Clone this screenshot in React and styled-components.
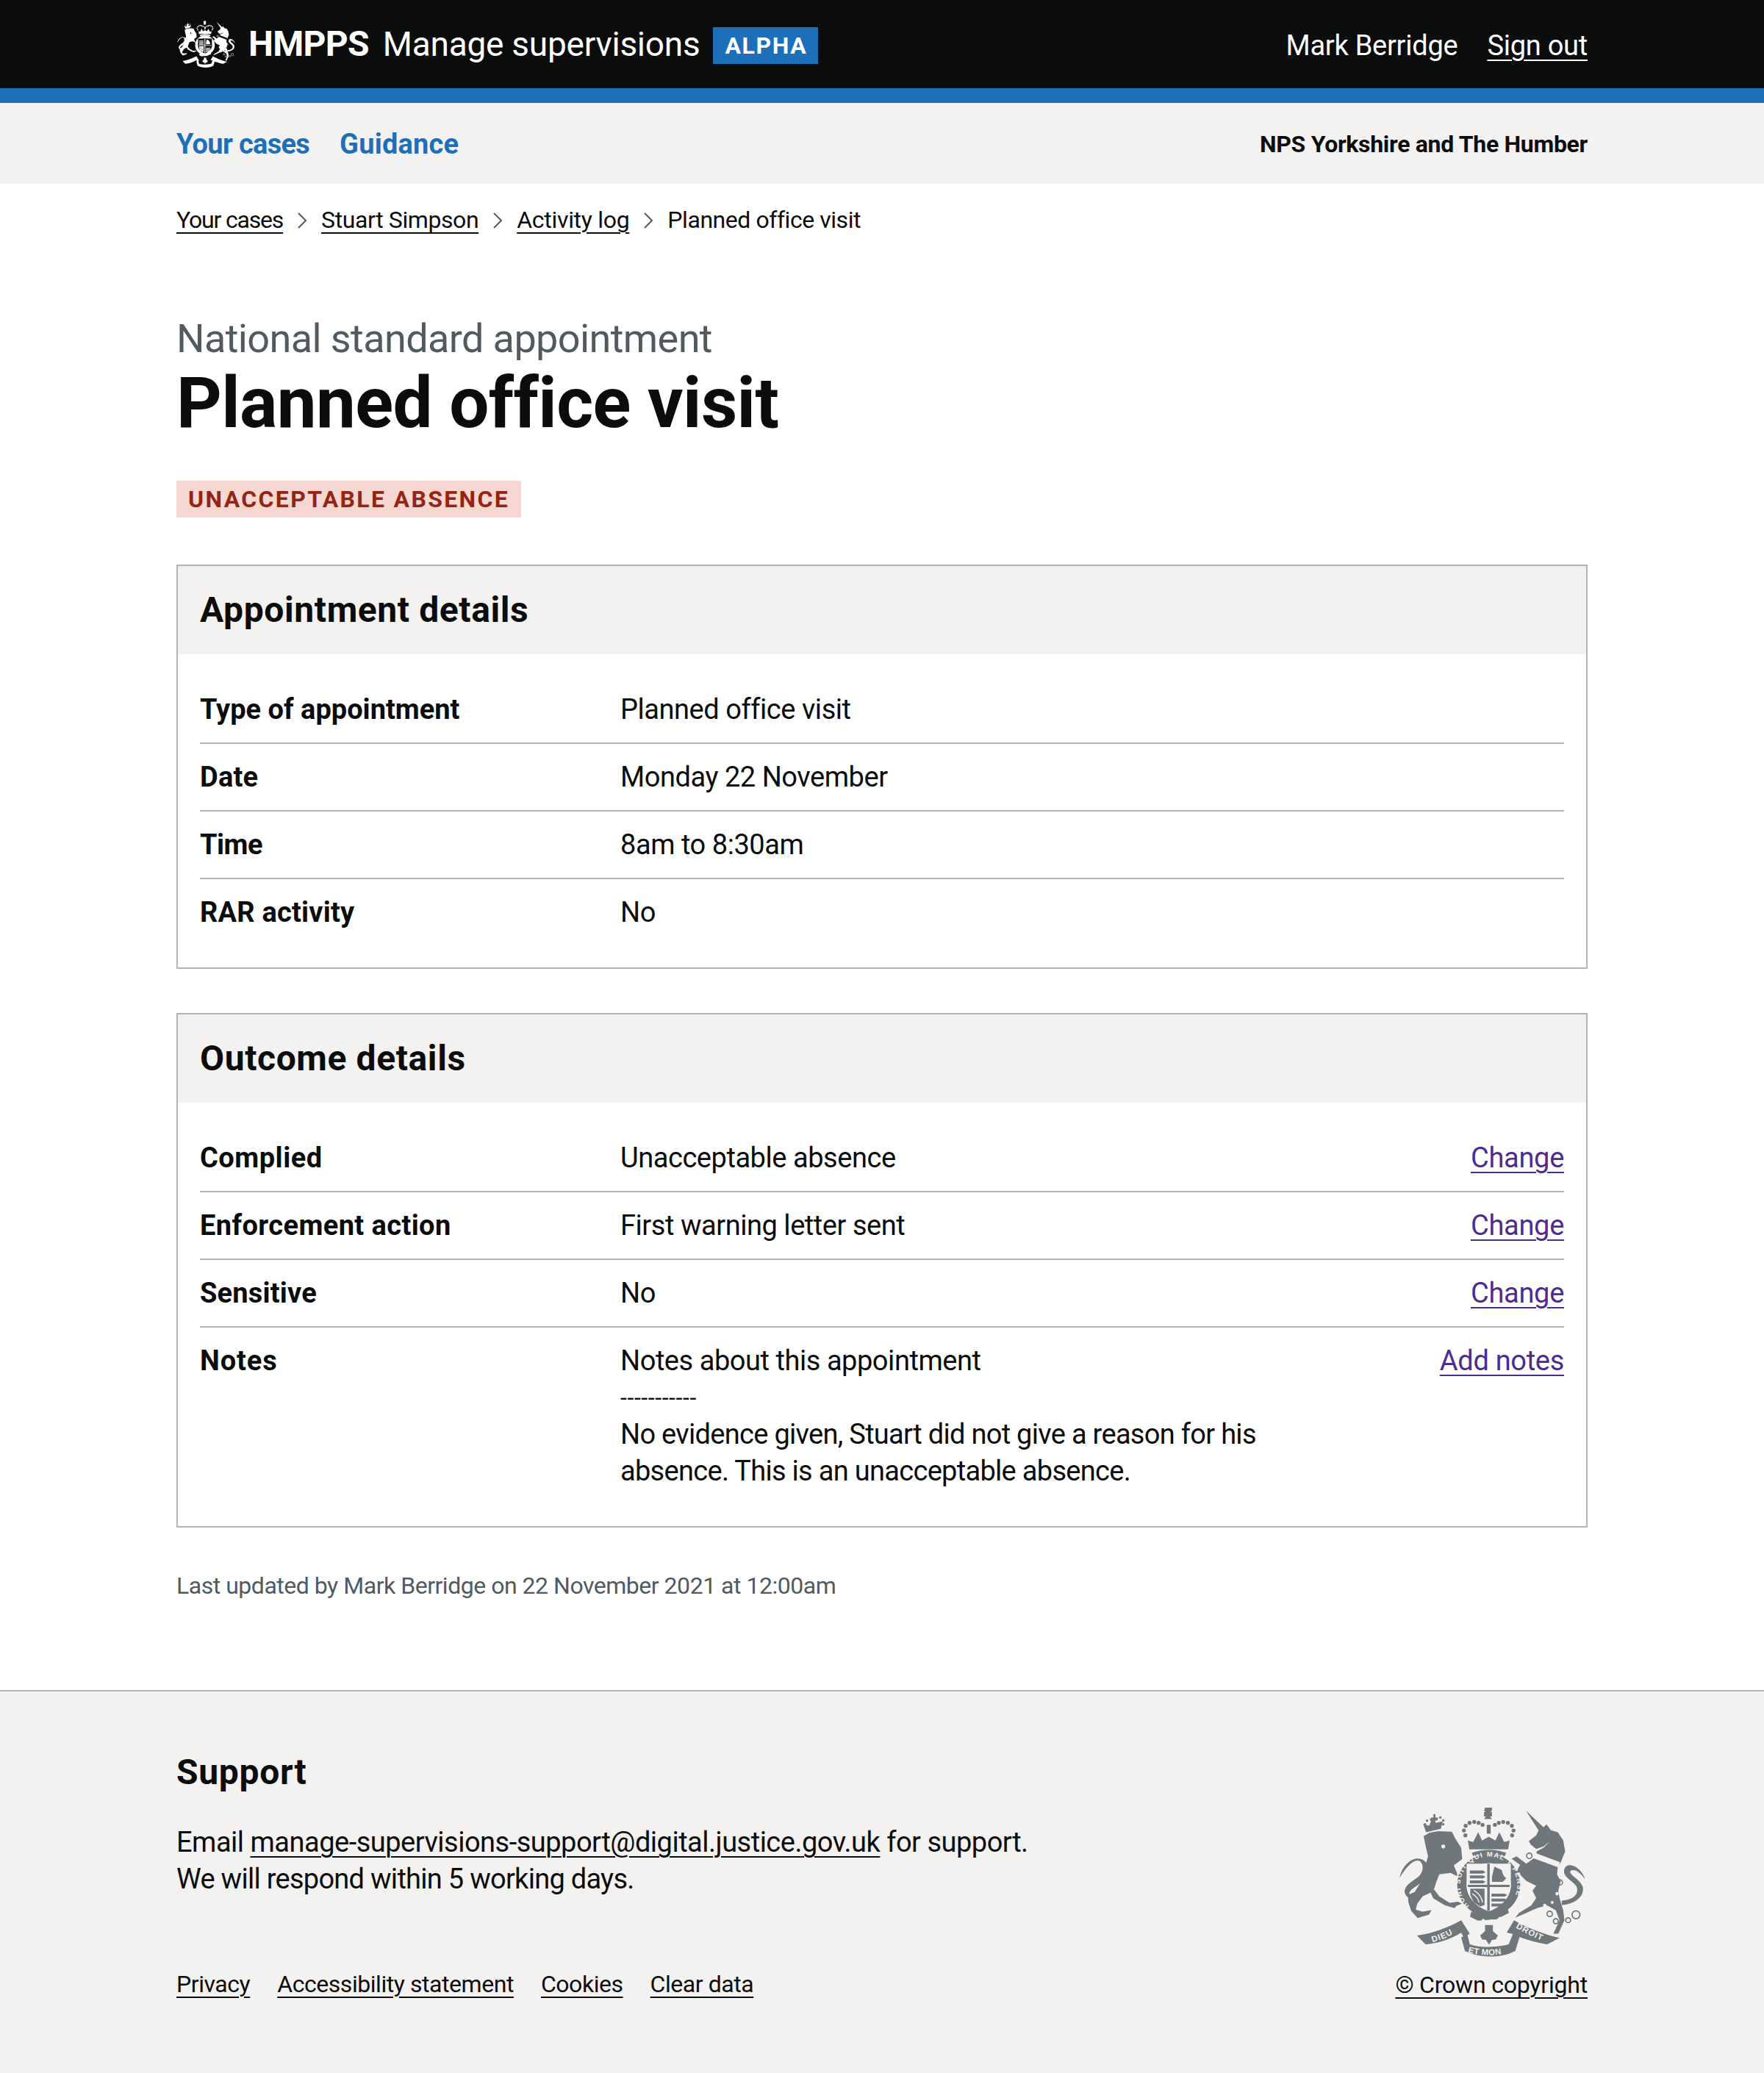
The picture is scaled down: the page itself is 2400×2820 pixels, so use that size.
import React from "react";
import styled, { createGlobalStyle } from "styled-components";

const Global = createGlobalStyle`
  html, body { margin: 0; padding: 0; background: #fff; }
  body { font-family: Roboto, "Noto Sans", Arial, sans-serif; color: #0b0c0c; font-size: 38px; line-height: 50px; }
  * { box-sizing: border-box; }
`;
const Page = styled.div`width: 2400px; height: 2820px; display: flex; flex-direction: column; overflow: hidden;`;
const Container = styled.div`width: 1920px; margin: 0 auto;`;
const Header = styled.header`background: #0b0c0c; border-bottom: 20px solid #1d70b8; height: 140px;`;
const HeaderInner = styled(Container)`height: 120px; display: flex; align-items: center; justify-content: space-between;`;
const Brand = styled.div`display: flex; align-items: center; color: #fff;`;
const Org = styled.span`font-size: 48px; font-weight: 700; margin-left: 18px; line-height: 60px; letter-spacing: -0.7px;`;
const Service = styled.span`font-size: 46px; margin-left: 19px; line-height: 60px; letter-spacing: -0.25px;`;
const Phase = styled.span`background: #1d70b8; color: #fff; font-size: 32px; font-weight: 700; letter-spacing: 1.6px; line-height: 50px; height: 50px; padding: 0 15px 0 16px; margin: 4px 0 0 18px;`;
const UserNav = styled.div`display: flex; gap: 40px; color: #fff; font-size: 38px; letter-spacing: -0.25px; padding-top: 3px;`;
const HeaderLink = styled.a`color: #fff; text-decoration: underline; text-underline-offset: 6px; text-decoration-thickness: 2px;`;
const Nav = styled.nav`background: #f3f2f1; height: 110px;`;
const NavInner = styled(Container)`height: 110px; display: flex; align-items: center; justify-content: space-between; padding-top: 2px;`;
const NavLinks = styled.div`display: flex; gap: 41px;`;
const NavLink = styled.a`color: #1d70b8; font-size: 38px; font-weight: 700; letter-spacing: ${p => p.$track}px;`;
const Region = styled.div`font-size: 32px; font-weight: 700; letter-spacing: -0.3px;`;
const Crumbs = styled.ol`list-style: none; margin: 0; padding: 27px 0 0; display: flex; align-items: center; font-size: 32px; line-height: 45px;`;
const Crumb = styled.li`display: flex; align-items: center; letter-spacing: ${p => p.$track}px;`;
const CrumbLink = styled.a`color: #0b0c0c; text-decoration: underline; text-underline-offset: 6px; text-decoration-thickness: 2px;`;
const Main = styled.main`padding-top: 109px; flex: 1;`;
const Caption = styled.div`color: #505a5f; font-size: 54px; line-height: 60px; letter-spacing: -0.6px;`;
const Title = styled.h1`margin: 7px 0 0; font-size: 96px; line-height: 100px; font-weight: 700; padding-bottom: 54px; letter-spacing: -0.6px;`;
const Tag = styled.strong`display: inline-block; background: #f6d7d2; color: #942514; font-size: 32px; font-weight: 700; letter-spacing: 2.35px; line-height: 50px; height: 50px; padding: 0 16px;`;
const Card = styled.section`border: 2px solid #b1b4b6; margin-top: ${p => p.$top}px;`;
const CardHead = styled.div`background: #f3f2f1; height: 120px; padding: 0 30px; display: flex; align-items: center;`;
const CardTitle = styled.h2`margin: 0; font-size: 48px; line-height: 60px; font-weight: 700; letter-spacing: 0.6px;`;
const List = styled.dl`margin: 0; padding: 30px 30px 30px;`;
const Row = styled.div`display: grid; grid-template-columns: 572px 1fr auto; border-bottom: ${p => (p.$last ? "none" : "2px solid #b1b4b6")}; padding: 20px 0;`;
const Key = styled.dt`font-weight: 700; letter-spacing: ${p => p.$track ?? 0.2}px;`;
const Value = styled.dd`margin: 0; letter-spacing: -0.45px;`;
const Action = styled.a`color: #4c2c92; text-decoration: underline; text-underline-offset: 6px; text-decoration-thickness: 2px; letter-spacing: -0.3px;`;
const Dashes = styled.div`font-size: 32px; line-height: 50px; height: 50px; letter-spacing: 0.6px;`;
const Note = styled.div`max-width: 900px; letter-spacing: -0.7px;`;
const Updated = styled.p`margin: 54px 0 0; color: #505a5f; font-size: 32px; line-height: 50px; letter-spacing: -0.48px;`;
const Footer = styled.footer`background: #f3f2f1; border-top: 2px solid #b1b4b6; height: 521px;`;
const FooterInner = styled(Container)`display: flex; justify-content: space-between; height: 100%;`;
const FooterMain = styled.div`padding-top: 80px;`;
const FooterHead = styled.h2`margin: 0; font-size: 48px; line-height: 60px; font-weight: 700; letter-spacing: 0.7px;`;
const FooterText = styled.p`margin: 40px 0 0; letter-spacing: -0.5px;`;
const FooterNote = styled.span`letter-spacing: -0.72px;`;
const FooterLink = styled.a`color: #0b0c0c; text-decoration: underline; text-underline-offset: 6px; text-decoration-thickness: 2px;`;
const FooterLinks = styled.div`display: flex; gap: 37px; margin-top: 98px; font-size: 32px; line-height: 40px; letter-spacing: -0.45px;`;
const FooterRight = styled.div`display: flex; flex-direction: column; align-items: flex-end; gap: 16px; padding-top: 154px; font-size: 32px; line-height: 40px; letter-spacing: -0.2px;`;
const CrestBox = styled.div`margin-right: 3px;`;
const Crest = styled.svg`display: block; flex: none;`;
const Chevron = styled.svg`display: block; margin: 0 19px; flex: none;`;

const archDots = [[402,225],[396,205],[403,186],[419,174],[438,170],[456,174],[472,182],[522,182],[538,174],[556,170],[575,174],[591,186],[598,205],[592,225]];
const crownDots = [[238,180],[246,165],[262,160],[284,160],[300,152],[312,164],[312,180]];
const lionBars = [[452,368],[452,388],[452,408],[540,462],[540,482],[540,502]];

function Arms({ width, height, fill, detail, text }) {
  return (
    <Crest width={width} height={height} viewBox="125 100 765 625" role="img" aria-label="Royal coat of arms">
      <g fill={fill}>
        <path d="M262 152h10v-14h8v14h10v8h-10v14l30-6-8 30-60 14-12-34 24 8 8-18z" />
        {crownDots.map(([x, y]) => <circle key={x + "" + y} cx={x} cy={y} r="5" />)}
        <path d="M232 228l25-14 35-6 55 2 13 26 25 40 4 45-34 26 15 36 15 14-25-10-18-10-46 6-12 30-10 32 22 28 42 26 34-4 16 8-22 8-8 10-40-12-46-28-12-24-32 16-22 30-6 24 28 8 36-6-10 18-46 14-26-28-12-36-2-30 28-12 28-46 18-70 8-30-10-42z" />
        <path d="M208 492c-40-6-62-28-50-52 10-22 40-34 58-52 14-16 18-42 2-58-24-14-56 22-84 68 6-28 22-60 52-74 24-12 52-2 62 20 10 26-4 52-26 72-18 16-42 26-48 42-2 14 20 24 46 24z" />
        <path d="M482 112h28v12l-6 6h6v18h-8l8 10h-32l8-10h-8v-18h6l-6-6z" />
        <path d="M489 182h16v36h-16z" />
        <path d="M412 246l22 6 20-40 16 34 27-16 27 16 16-34 20 40 22-6-6 36H418z" />
        <path d="M428 296c44-16 96-16 140 0l-6 14c-38-12-90-12-128 0z" />
        {archDots.map(([x, y]) => <circle key={x} cx={x} cy={y} r="8" />)}
        <path fillRule="evenodd" d="M497 300c70 0 128 56 128 126s-58 128-128 128-128-58-128-128 58-126 128-126zm0 38c-50 0-90 40-90 88s40 90 90 90 90-42 90-90-40-88-90-88z" />
        <path d="M425 536l150-10 4 14-50 26-76 6-32-16z" />
        <path d="M648 124l72 68 12-12 18 24 28 8 22 33 8 45-18 45-10 15-90-35 2-25 28-15 25-25-25 20-30 10-22-18-8-14 30-23 10-20z" />
        <path d="M680 318l98 36-3 31 15 25-10 40 5 30 15 50 5 40-25 55h-20l25-55-15-40-35-20-40 10-45 20-45 20 15-20 50-30 20-30-15-30 15-20-40-20-40-40 15-25-35-25 20-10 40 30z" />
        <path d="M794 490c38-2 70-20 62-52-6-22-44-34-52-60-4-18 8-34 26-32 24 4 46 22 60 58-10-12-26-32-40-36-12-4-22-2-22 6 6 18 46 34 52 62 6 38-32 68-86 72z" />
        <path d="M205 632c60-7 125-32 180-62l35 55-25 15-10-20c-45 30-105 45-145 48z" />
        <path d="M385 640l15 55c60 30 150 30 205 0l20-65-25-15-22 53c-58 14-118 14-158 0l-10-40z" />
        <path d="M570 620l30-50c50 30 130 60 185 72l-50 26c-55-8-115-28-145-43z" />
        <path d="M482 590h32v24l20 18-8 16-16 2-12 20-12-20-16-2-8-16 20-18z" />
      </g>
      <g fill={detail}>
        <path d="M407 340h180v90c0 50-45 90-90 104-45-14-90-54-90-104z" />
        <circle cx="312" cy="270" r="8" />
        <path d="M685 296l102 38-6 18-102-38z" />
        <circle cx="475" cy="570" r="6" /><circle cx="508" cy="572" r="6" /><circle cx="542" cy="562" r="6" />
        <circle cx="725" cy="510" r="7" /><circle cx="775" cy="462" r="7" /><circle cx="755" cy="498" r="6" />
      </g>
      <g fill={fill}>
        <path d="M491 340h10v192h-10zM412 426h170v9H412z" />
        {lionBars.map(([x, y]) => <path key={x + "" + y} d={`M${x - 32} ${y}h54l10 6-10 6h-54z`} />)}
        <path d="M520 352l30 14 6 20 12 14-14 14h-44v-20z" />
        <path d="M422 442h58v66l-18 6-26-18-14-28z" />
      </g>
      <g fill="none" stroke={detail} strokeWidth="4">
        <path d="M436 448c18 10 32 26 36 50M430 462c14 8 24 20 28 36" />
      </g>
      <g fill="none" stroke={fill} strokeWidth="5">
        <circle cx="662" cy="308" r="11" /><circle cx="652" cy="392" r="11" /><circle cx="786" cy="416" r="11" />
        <circle cx="745" cy="544" r="11" /><circle cx="770" cy="574" r="10" /><circle cx="820" cy="570" r="10" /><circle cx="852" cy="548" r="16" />
      </g>
      {text && (
        <>
          <defs>
            <path id="garter" d="M418 512A116 116 0 1 1 576 512" />
            <path id="dieu" d="M268 660C305 650 340 635 372 612" />
            <path id="droit" d="M606 600C650 625 690 645 730 660" />
            <path id="etmon" d="M412 700C460 716 540 716 584 698" />
          </defs>
          <g fill={detail} fontFamily="'Liberation Sans', sans-serif" fontWeight="700">
            <text fontSize="28"><textPath href="#garter" textLength="500" lengthAdjust="spacing">HONI SOIT QUI MAL Y PENSE</textPath></text>
            <text fontSize="34" letterSpacing="3"><textPath href="#dieu">DIEU</textPath></text>
            <text fontSize="34" letterSpacing="3"><textPath href="#droit">DROIT</textPath></text>
            <text fontSize="34" letterSpacing="1"><textPath href="#etmon">ET MON</textPath></text>
          </g>
        </>
      )}
    </Crest>
  );
}

const Arrow = () => (
  <Chevron width="14" height="24" viewBox="0 0 14 24"><path d="M2 2l10 10L2 22" fill="none" stroke="#505a5f" strokeWidth="2" /></Chevron>
);

export default function App() {
  return (
    <Page>
      <Global />
      <Header>
        <HeaderInner>
          <Brand>
            <Arms width={80} height={66} fill="#fff" detail="#0b0c0c" />
            <Org>HMPPS</Org>
            <Service>Manage supervisions</Service>
            <Phase>ALPHA</Phase>
          </Brand>
          <UserNav>
            <span>Mark Berridge</span>
            <HeaderLink href="#">Sign out</HeaderLink>
          </UserNav>
        </HeaderInner>
      </Header>
      <Nav>
        <NavInner>
          <NavLinks>
            <NavLink $track={-0.7}>Your cases</NavLink>
            <NavLink $track={0.2}>Guidance</NavLink>
          </NavLinks>
          <Region>NPS Yorkshire and The Humber</Region>
        </NavInner>
      </Nav>
      <Container>
        <Crumbs>
          <Crumb $track={-1.2}><CrumbLink href="#">Your cases</CrumbLink><Arrow /></Crumb>
          <Crumb $track={-0.4}><CrumbLink href="#">Stuart Simpson</CrumbLink><Arrow /></Crumb>
          <Crumb $track={-0.3}><CrumbLink href="#">Activity log</CrumbLink><Arrow /></Crumb>
          <Crumb $track={-0.45}>Planned office visit</Crumb>
        </Crumbs>
      </Container>
      <Main>
        <Container>
          <Caption>National standard appointment</Caption>
          <Title>Planned office visit</Title>
          <Tag>UNACCEPTABLE ABSENCE</Tag>
          <Card $top={64}>
            <CardHead><CardTitle>Appointment details</CardTitle></CardHead>
            <List>
              <Row><Key $track={0}>Type of appointment</Key><Value>Planned office visit</Value></Row>
              <Row><Key>Date</Key><Value>Monday 22 November</Value></Row>
              <Row><Key $track={-0.5}>Time</Key><Value>8am to 8:30am</Value></Row>
              <Row $last><Key>RAR activity</Key><Value>No</Value></Row>
            </List>
          </Card>
          <Card $top={60}>
            <CardHead><CardTitle>Outcome details</CardTitle></CardHead>
            <List>
              <Row><Key $track={0.5}>Complied</Key><Value>Unacceptable absence</Value><Action href="#">Change</Action></Row>
              <Row><Key $track={0.4}>Enforcement action</Key><Value>First warning letter sent</Value><Action href="#">Change</Action></Row>
              <Row><Key>Sensitive</Key><Value>No</Value><Action href="#">Change</Action></Row>
              <Row $last>
                <Key $track={0.9}>Notes</Key>
                <Value>
                  <div>Notes about this appointment</div>
                  <Dashes>-----------</Dashes>
                  <Note>No evidence given, Stuart did not give a reason for his absence. This is an unacceptable absence.</Note>
                </Value>
                <Action href="#">Add notes</Action>
              </Row>
            </List>
          </Card>
          <Updated>Last updated by Mark Berridge on 22 November 2021 at 12:00am</Updated>
        </Container>
      </Main>
      <Footer>
        <FooterInner>
          <FooterMain>
            <FooterHead>Support</FooterHead>
            <FooterText>
              Email <FooterLink href="#">manage-supervisions-support@digital.justice.gov.uk</FooterLink> for support.<br />
              <FooterNote>We will respond within 5 working days.</FooterNote>
            </FooterText>
            <FooterLinks>
              <FooterLink href="#">Privacy</FooterLink>
              <FooterLink href="#">Accessibility statement</FooterLink>
              <FooterLink href="#">Cookies</FooterLink>
              <FooterLink href="#">Clear data</FooterLink>
            </FooterLinks>
          </FooterMain>
          <FooterRight>
            <CrestBox><Arms width={256} height={209} fill="#6f777b" detail="#f3f2f1" text /></CrestBox>
            <FooterLink href="#">© Crown copyright</FooterLink>
          </FooterRight>
        </FooterInner>
      </Footer>
    </Page>
  );
}
